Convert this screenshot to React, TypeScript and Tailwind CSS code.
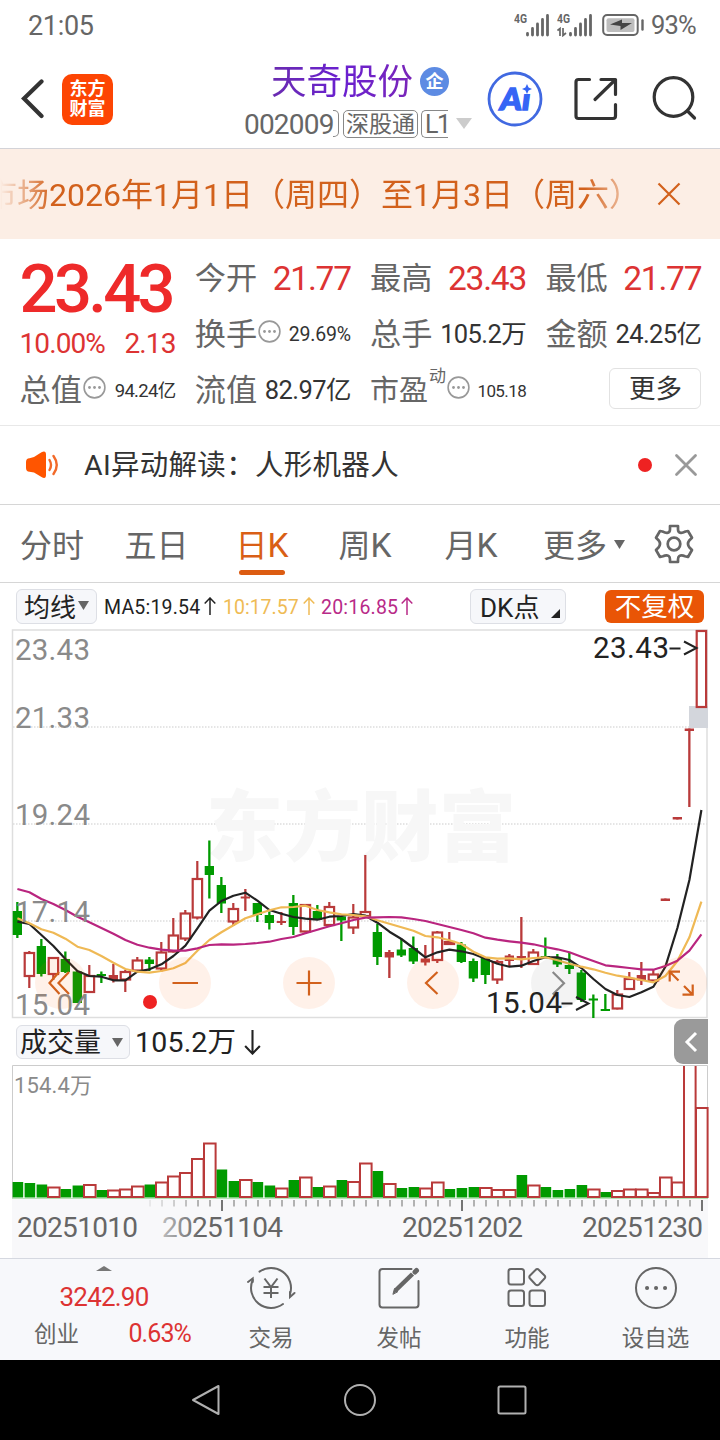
import React from 'react';
import clsx from 'clsx';

const INK = '#222222';
const RED = '#b93a3a';
const GREEN = '#009a00';
const ORANGE = '#d2611c';

const STEP = 12;
const FIRST_X = 17;
const xAt = (i: number) => FIRST_X + i * STEP;

// kind: h = hollow red, r = solid red, g = green; then wick top, body top, body bottom, wick bottom
type Candle = [string, number, number, number, number];

const candles: Candle[] = [
  ['g', 902, 911, 935, 938], ['h', 951, 952, 977, 988], ['g', 939, 946, 974, 976.5], ['h', 957, 957, 975, 980],
  ['g', 951.5, 959, 972, 973], ['g', 971, 971.5, 1003, 1003], ['h', 965, 975, 993, 993], ['g', 971.5, 974, 976, 983],
  ['r', 964, 975, 980, 982.5], ['h', 970, 971, 980.5, 992], ['h', 957, 959.5, 971.5, 971.5], ['g', 957, 959.5, 964, 971],
  ['h', 942, 951.5, 969.5, 971.5], ['h', 918, 934.5, 952.5, 952.5], ['h', 910, 912.5, 939.5, 941], ['h', 861, 878, 918.5, 919.5],
  ['g', 840.5, 866, 875, 898.5], ['g', 877, 885, 903.5, 913], ['h', 903, 908, 922.5, 926], ['r', 889, 896.5, 898.5, 911],
  ['g', 903, 903, 915, 922], ['g', 911.5, 915, 923, 929.5], ['r', 912, 921, 923, 925], ['g', 895, 903, 927, 935],
  ['h', 904, 904, 932.5, 932.5], ['g', 905, 911, 920, 920], ['h', 902, 906, 926, 926], ['g', 916, 916.5, 920.5, 941],
  ['h', 904, 916.5, 928.5, 934], ['h', 855, 911, 917, 917], ['g', 924, 932, 957, 965], ['r', 950, 952, 957.5, 978],
  ['g', 939, 949.5, 955.5, 957], ['g', 936.5, 948, 961.5, 964], ['r', 945, 958.5, 962.5, 965.5], ['h', 931, 931.5, 961, 963],
  ['h', 932, 941, 945, 945], ['g', 942, 944.5, 962, 963], ['g', 958.5, 961, 978.5, 982], ['g', 957, 957, 975, 984],
  ['h', 960, 961, 980.5, 984], ['r', 954, 955.5, 961, 966], ['r', 917, 956, 959, 968], ['h', 949, 951.5, 965, 965],
  ['g', 937.5, 956, 958, 958], ['g', 954, 958, 964.5, 967], ['g', 953, 965, 969, 974], ['g', 970, 972.5, 1000, 1002],
  ['g', 994.5, 998.5, 1000.5, 1018], ['g', 994, 1009, 1011, 1011], ['h', 990, 993.5, 1009.5, 1009.5], ['h', 972, 978, 990, 990],
  ['r', 962, 975, 980.5, 985], ['h', 970, 973.5, 981.5, 981.5], ['r', 898.5, 898.5, 901, 901], ['r', 817, 817, 819.5, 819.5],
  ['r', 728.5, 728.5, 731, 807], ['h', 630, 630, 708, 708],
];

const ma5 = [
  921.7, 924, 935, 946, 959, 971, 976, 976.7, 980.3, 980.3, 971.7, 969.3, 964.3, 956, 945.7, 928.3, 910.7, 901, 895.7, 892.7,
  900.7, 910, 913.7, 917, 918.7, 919.7, 916.7, 916, 914, 915.7, 922.7, 931.7, 939, 948, 957.3, 952.3, 949.7, 951.3, 954, 958.7,
  963.7, 966.7, 965.7, 961, 957.3, 957.3, 960, 968, 979, 989, 995, 997, 992.3, 986.7, 966.7, 928, 880, 810,
];

const ma10 = [
  918.3, 923.3, 929.3, 932.7, 938.7, 946.7, 950, 956, 962.7, 969, 971.7, 972.7, 971, 968.3, 963, 950.7, 940, 932.3, 925.3, 918.3,
  914.3, 910.3, 907.3, 907, 905.7, 910, 912.3, 914.3, 915, 916.3, 920.3, 923.7, 927.3, 930.7, 936, 937.3, 940.3, 944, 951.7, 957.3,
  958.7, 958.3, 959.3, 958, 957.3, 960.3, 963.7, 966.7, 969.3, 972.7, 975.7, 977.7, 980, 982.3, 976, 961, 937.3, 901.7,
];

const ma20 = [
  889, 892.3, 899, 904, 910, 916.7, 922.3, 928, 933.7, 940, 944.7, 947.7, 949.7, 950.7, 950.7, 948.3, 945, 944.3, 944.7, 944,
  943, 941.7, 939, 937, 933.3, 929.7, 926.3, 923.3, 920, 917.7, 917.3, 917, 917.3, 919, 921, 924, 927, 930, 933.3, 937.7,
  939.7, 941.3, 942.7, 944.3, 947, 949.3, 952.3, 956.7, 961, 965.3, 966.7, 968, 969.3, 969.7, 966, 960.7, 950.7, 934.3,
];

const volumeTops = [
  1182, 1183, 1184.5, 1186.5, 1189, 1185.5, 1184, 1190, 1189.5, 1188.5, 1185.5, 1184.5, 1181.5, 1175.5, 1172, 1158, 1142.5,
  1169.5, 1181, 1179, 1182, 1185.5, 1187.5, 1180, 1176.5, 1187, 1185.5, 1180, 1181, 1162.5, 1171, 1183, 1188, 1187, 1187.5,
  1181.5, 1189, 1188, 1187, 1187, 1189, 1189, 1175, 1184.5, 1187, 1190, 1189, 1185, 1188.5, 1192, 1190, 1188.5, 1188.5, 1192,
  1176.5, 1181.5, 1060, 1107,
];
const volumeKinds = 'gggrggrgrrrgrrrrrggrggrgrgrgrrgrggrrgggrrrgrggggrgrrrrrrrr';

const linePoints = (ys: number[]) => ys.map((y, i) => `${xAt(i) + 0.4},${y}`).join(' ');

function CandleMark({ data, x }: { data: Candle; x: number }) {
  const [kind, high, top, bottom, low] = data;
  const color = kind === 'g' ? GREEN : RED;
  if (kind === 'h') {
    return (
      <g stroke={color} strokeWidth="2.2" fill="none">
        <path d={`M${x + 0.3} ${high}V${top + 1}M${x + 0.3} ${bottom - 1}V${low}`} />
        <rect x={x - 4.3} y={top + 1} width="9.4" height={Math.max(bottom - top - 2, 1)} />
      </g>
    );
  }
  return (
    <g fill={color}>
      <rect x={x - 0.8} y={high} width="2.3" height={low - high} />
      <rect x={x - 4.3} y={top} width="9.3" height={bottom - top} />
    </g>
  );
}

function MoreDots({ className }: { className?: string }) {
  return (
    <svg className={clsx('size-[23px] shrink-0', className)} viewBox="0 0 23 23">
      <circle cx="11.5" cy="11.5" r="10.4" fill="none" stroke="#999" strokeWidth="1.6" />
      <g fill="#999">
        <circle cx="6.5" cy="11.5" r="1.4" />
        <circle cx="11.5" cy="11.5" r="1.4" />
        <circle cx="16.5" cy="11.5" r="1.4" />
      </g>
    </svg>
  );
}

function Signal({ data }: { data?: boolean }) {
  return (
    <svg className="h-6 w-9" viewBox="0 0 36 24">
      <text x="0" y="10" fontSize="13" fontWeight="700" fill="#666" textLength="13" lengthAdjust="spacingAndGlyphs">4G</text>
      <path d="M13.5 20.500v1.5M18.5 15.5v6.5M23.5 11v11M28.5 6.5v15.5M33.5 2.5v19.5" stroke="#666" strokeWidth="2.8" strokeLinecap="round" />
      {data && <path d="M0.5 17.5L3 15.5V23M6 15v7.5l3-2.5" fill="none" stroke="#666" strokeWidth="1.7" />}
    </svg>
  );
}

function StatusBar() {
  return (
    <div className="flex h-[50px] items-center pl-7 pr-6 pt-0.5 text-[#666]">
      <span className="text-[27px] leading-none tracking-[-0.3px]">21:05</span>
      <div className="ml-auto flex items-center">
        <div className="mb-0.5"><Signal /></div>
        <div className="mb-0.5 ml-[7px]"><Signal data /></div>
        <svg className="mb-0.5 ml-[9px] h-6 w-[43px]" viewBox="0 0 43 24">
          <rect x="1.2" y="2" width="34.5" height="20" rx="4" fill="none" stroke="#666" strokeWidth="2" />
          <rect x="4.5" y="5.2" width="28" height="13.8" rx="2" fill="#bdbdbd" />
          <path d="M8 11.5L20 6.5V10H30L18.5 17V13Z" fill="#444" />
          <path d="M40.5 7.5v9" stroke="#666" strokeWidth="2.4" strokeLinecap="round" />
        </svg>
        <span className="ml-1.5 text-[25.5px] leading-none tracking-[-0.8px]">93%</span>
      </div>
    </div>
  );
}

function Header() {
  return (
    <header className="flex h-[99px] items-center border-b border-[#d3d3d8]">
      <svg className="ml-5 h-[42px] w-6" viewBox="0 0 24 42">
        <path d="M21.5 3.5L4 20.5L21.5 38" fill="none" stroke="#333" strokeWidth="4.2" strokeLinecap="round" />
      </svg>
      <div className="ml-[18px] flex size-[51px] flex-col items-center justify-center rounded-[10px] bg-[#fd4503] text-[18px] font-bold leading-[20px] text-white">
        <span>东方</span>
        <span>财富</span>
      </div>
      <div className="ml-[131px] w-[230px]">
        <div className="ml-[27px] flex h-[42px] items-center">
          <span className="whitespace-nowrap bg-gradient-to-r from-[#6a2bb0] via-[#6a1fd0] to-[#7a25b8] bg-clip-text text-[35.5px] leading-[44px] text-transparent">天奇股份</span>
          <span className="ml-[7px] flex size-[29px] shrink-0 items-center justify-center rounded-full bg-[#5d8be3] text-[18px] font-bold leading-none text-white">企</span>
        </div>
        <div className="mt-[7px] flex h-[28px] items-center text-[#666]">
          <span className="w-[89px] whitespace-nowrap pt-0.5 text-[28px] leading-none tracking-[-0.8px]">002009</span>
          <span className="h-[27px] w-[6px] rounded-r-[5px] border border-l-0 border-[#888]" />
          <span className="ml-1 flex h-[28px] w-[75px] items-center justify-center rounded-[5px] border border-[#888] pt-px text-[23px] leading-none">深股通</span>
          <span className="ml-[3px] flex h-[28px] w-[27px] items-center rounded-l-[5px] border border-r-0 border-[#888] pl-[3px] pt-px text-[25px] leading-none tracking-[-1.5px]">L1</span>
          <svg className="ml-2 h-[11px] w-4" viewBox="0 0 16 11"><path d="M0 0H16L8 11Z" fill="#ccc" /></svg>
        </div>
      </div>
      <svg className="ml-[13px] size-14" viewBox="0 0 56 56">
        <text x="13" y="38.5" fontFamily="Lato, sans-serif" fontWeight="900" fontStyle="italic" fontSize="31" fill="#3565f5" stroke="#3565f5" strokeWidth="1.3" textLength="30.5" lengthAdjust="spacingAndGlyphs">Ai</text>
        <rect x="34" y="11" width="13" height="12" fill="#fff" />
        <path d="M40 13L41.6 16.4L45 18L41.6 19.6L40 23L38.4 19.6L35 18L38.4 16.4Z" fill="#3565f5" />
        <circle cx="28" cy="28" r="26" fill="none" stroke="#4169e1" strokeWidth="2.8" />
      </svg>
      <svg className="ml-[31px] size-11" viewBox="0 0 44 44" fill="none" stroke="#333" strokeWidth="3.2" strokeLinecap="round" strokeLinejoin="round">
        <path d="M15.5 2.5H4.5Q2 2.5 2 5V39Q2 41.5 4.5 41.5H39Q41.5 41.5 41.5 39V27.5" />
        <path d="M27 2.5H41.5V17.5M21 22.5L41 3" />
      </svg>
      <svg className="ml-[34px] size-[46px]" viewBox="0 0 46 46" fill="none" stroke="#333" strokeWidth="3.2" strokeLinecap="round">
        <circle cx="21.5" cy="21" r="19.3" />
        <path d="M35.5 35L42.5 42" />
      </svg>
    </header>
  );
}

function Notice() {
  return (
    <div className="flex h-[90px] items-center bg-[#fceee5] text-[#d2611c]">
      <div className="w-[624px] overflow-hidden pt-0.5 [mask-image:linear-gradient(to_right,transparent,#000_52px,#000_585px,transparent_645px)]">
        <div className="-ml-[15px] whitespace-nowrap text-[32px] leading-[44px]">市场2026年1月1日（周四）至1月3日（周六）</div>
      </div>
      <svg className="ml-[33px] size-6" viewBox="0 0 24 24"><path d="M1.5 1.5L22.5 22.5M22.5 1.5L1.5 22.5" stroke={ORANGE} strokeWidth="2.2" /></svg>
    </div>
  );
}

interface QuoteProps {
  label: string;
  value: string;
  size: string;
  dots?: boolean;
}

function Quote({ label, value, size, dots }: QuoteProps) {
  return (
    <div className="flex h-14 items-center whitespace-nowrap">
      <span className="text-[31.2px] leading-none text-[#666]">{label}</span>
      {dots && <MoreDots className="mb-2 ml-px" />}
      <span className={clsx('ml-auto leading-none', size)}>{value}</span>
    </div>
  );
}

const valueRed = 'text-[33.5px] tracking-[-1.2px] text-[#d33]';
const valueMid = 'text-[25.5px] tracking-[-0.6px] text-[#333]';

function Quotes() {
  return (
    <section className="h-[187px] border-b border-[#e8e8e8] pl-[19.5px] pt-3">
      <div className="grid grid-cols-[156px_156px_156px_156px] gap-x-[19.3px]">
        <div className="row-span-2 h-28 whitespace-nowrap text-[#ee2a2a]">
          <div className="mt-[5px] text-[67px] font-medium leading-[66px] tracking-[-3.7px]">23.43</div>
          <div className="mt-[8px] flex justify-between text-[28px] leading-[28px] tracking-[-0.9px] text-[#d33]">
            <span>10.00%</span>
            <span>2.13</span>
          </div>
        </div>
        <Quote label="今开" value="21.77" size={valueRed} />
        <Quote label="最高" value="23.43" size={valueRed} />
        <Quote label="最低" value="21.77" size={valueRed} />
        <Quote label="换手" value="29.69%" size="text-[19.5px] tracking-[-0.2px] text-[#333]" dots />
        <Quote label="总手" value="105.2万" size={valueMid} />
        <Quote label="金额" value="24.25亿" size={valueMid} />
        <Quote label="总值" value="94.24亿" size="text-[18.5px] tracking-[-0.7px] text-[#333]" dots />
        <Quote label="流值" value="82.97亿" size={valueMid} />
        <div className="flex h-14 items-center whitespace-nowrap text-[#666]">
          <span className="text-[29px] leading-none">市盈</span>
          <span className="mb-[29px] ml-px text-[17px] leading-none">动</span>
          <MoreDots className="mb-2 ml-px" />
          <span className="ml-auto text-[17px] leading-none tracking-[-0.6px] text-[#333]">105.18</span>
        </div>
        <div className="ml-auto mt-[5px] flex h-[41px] w-[92px] items-center justify-center rounded-md border border-[#e2e2e2] pt-0.5 text-[26.5px] leading-none text-[#333]">更多</div>
      </div>
    </section>
  );
}

function AiNews() {
  return (
    <div className="flex h-[79px] items-center border-b border-[#d6d6d6]">
      <svg className="ml-[26px] h-7 w-8" viewBox="0 0 32 28">
        <path d="M0 11Q0 7.5 3.5 7.3L8 6L15.5 1.3Q20 -0.8 20 3.5V24Q20 28.5 15.5 26L8 21.5L3.5 20.7Q0 20.5 0 17Z" fill="#ff5500" />
        <path d="M23.5 9Q26.5 14 23.5 19M27.5 5Q34 14 27.5 23" fill="none" stroke="#f26a2a" strokeWidth="2.4" strokeLinecap="round" />
      </svg>
      <span className="ml-[26px] whitespace-nowrap pt-[3px] text-[28.5px] leading-none tracking-[0.3px] text-[#333]">AI异动解读：人形机器人</span>
      <span className="ml-auto size-3.5 rounded-full bg-[#ee2222]" />
      <svg className="ml-[22px] mr-[22px] size-6" viewBox="0 0 24 24"><path d="M2.5 2.5L21.5 21.5M21.5 2.5L2.5 21.5" stroke="#999" strokeWidth="2.8" strokeLinecap="round" /></svg>
    </div>
  );
}

function Tabs() {
  return (
    <nav className="flex h-[78px] items-center whitespace-nowrap border-b border-[#d6d6d6] pl-5 pt-[5px] text-[32px] leading-none text-[#666]">
      <span className="w-[104.5px]">分时</span>
      <span className="w-[111px]">五日</span>
      <span className="relative w-[103px] text-[#d95f16]">
        日<span className="text-[33.5px]">K</span>
        <span className="absolute left-[3px] top-[41px] h-[5px] w-[46px] rounded-full bg-[#dc5c12]" />
      </span>
      <span className="w-[106px]">周<span className="text-[33.5px]">K</span></span>
      <span className="w-[98.5px]">月<span className="text-[33.5px]">K</span></span>
      <span>更多</span>
      <svg className="mb-1 ml-[7px] h-[9px] w-[11px]" viewBox="0 0 11 9"><path d="M0 0H11L5.5 9Z" fill="#666" /></svg>
      <svg className="mb-[5px] ml-[29px] size-10" viewBox="0 0 40 40" fill="none" stroke="#666" strokeWidth="2.7" strokeLinejoin="round">
        <path d="M16 2H24V5.5Q24 8.5 26.8 8.8Q28.5 9 31.5 7.5L34 7L38 13.8L35.5 16.2Q32.5 20 35.5 23.5L38 26L34 33L31 32.2Q27.5 30.5 25.3 32Q24 33 24 35.5V38H16V35.5Q16 33 14.7 32Q12.5 30.5 9 32.2L6 33L2 26L4.5 23.5Q7.5 20 4.5 16.2L2 13.8L6 7L8.5 7.5Q11.5 9 13.2 8.8Q16 8.5 16 5.5Z" />
        <circle cx="20" cy="20" r="6.3" />
      </svg>
    </nav>
  );
}

function Arrow({ down, className }: { down?: boolean; className: string }) {
  return (
    <svg className={className} viewBox="0 0 12 18" fill="none" stroke="currentColor" strokeWidth="1.5">
      <path d={down ? 'M6 0V17M0.7 11.5L6 17L11.3 11.5' : 'M6 18V1M0.7 6.5L6 1L11.3 6.5'} />
    </svg>
  );
}

function MaBar() {
  return (
    <div className="flex h-[46px] items-center whitespace-nowrap px-4 text-[19.5px] leading-none">
      <span className="flex h-[35px] w-[81px] items-center rounded-[6px] border border-[#dddfe5] bg-[#f6f7fa] pl-[7px] pt-[3px] text-[26px] text-[#222]">
        均线
        <svg className="mb-1 ml-[2px] h-[9px] w-[11px]" viewBox="0 0 11 9"><path d="M0 0H11L5.5 9Z" fill="#666" /></svg>
      </span>
      <span className="ml-[7px] w-[98px] pt-[3px] tracking-[0.2px] text-[#222]">MA5:19.54</span>
      <Arrow className="ml-[2px] h-[18px] w-3 text-[#222]" />
      <span className="ml-[7px] w-[79px] pt-[3px] text-[#efbb55]">10:17.57</span>
      <Arrow className="ml-[1px] h-[18px] w-3 text-[#efbb55]" />
      <span className="ml-[6px] w-[80px] pt-[3px] tracking-[0.2px] text-[#b82a88]">20:16.85</span>
      <Arrow className="h-[18px] w-3 text-[#b82a88]" />
      <span className="ml-auto mr-[39px] flex h-[35px] w-[96px] items-end rounded-[6px] border border-[#dddfe5] bg-[#f6f7fa] pb-[2px] pl-[9px] text-[26px] leading-[26px] text-[#222]">
        DK点
        <svg className="mb-[3px] ml-auto mr-[5px] size-[9px]" viewBox="0 0 9 9"><path d="M9 0V9H0Z" fill="#222" /></svg>
      </span>
      <span className="flex h-[33px] w-[99px] items-center justify-center rounded-[6px] bg-[#e95506] pt-[3px] text-[26.5px] text-white">不复权</span>
    </div>
  );
}

const priceLabels: [string, number][] = [['23.43', 660], ['21.33', 728], ['19.24', 825], ['17.14', 922], ['15.04', 1014.5]];

function PriceChart() {
  return (
    <svg className="block h-[390px] w-[720px] overflow-visible" viewBox="0 629 720 390">
      <rect x="12.5" y="630" width="694.5" height="387.5" fill="none" stroke="#dedede" strokeWidth="1.5" />
      <path d="M13 727H707M13 824H707M13 921H707" stroke="#ddd" strokeWidth="1.5" strokeDasharray="1.5 1.5" />
      <text x="206" y="855" fontSize="77" fontWeight="900" fill="#f7f7f7" textLength="310">东方财富</text>
      <rect x="689" y="706" width="19" height="22" fill="#d3d6dc" />
      {candles.map((c, i) => <CandleMark key={i} data={c} x={xAt(i)} />)}
      <g fill="none" strokeWidth="2.2" strokeLinejoin="round">
        <polyline points={linePoints(ma5)} stroke={INK} />
        <polyline points={linePoints(ma10)} stroke="#efb955" />
        <polyline points={linePoints(ma20)} stroke="#b9257f" />
      </g>
      <g fill="#8a8a8a" fontSize="29.5">
        {priceLabels.map(([text, y]) => <text key={text} x="15" y={y} textLength="75">{text}</text>)}
      </g>
      <g fill="#ff5a00" fillOpacity="0.085">
        {[61, 185, 309, 433, 681].map((cx) => <circle key={cx} cx={cx} cy="983" r="26" />)}
        <circle cx="557" cy="983" r="26" fill="#555" fillOpacity="0.07" />
      </g>
      <g fill="none" stroke={ORANGE} strokeWidth="2.2">
        <path d="M59 972L49.5 983L59.5 994M69 972L58.5 983L69 994" />
        <path d="M172.5 983H198M296.5 983H321.5M309 970.5V995.5" />
        <path d="M437.5 972L426 983L437.5 994" />
        <path d="M680 971.7H669.7V981.5M669.7 971.7L678.5 980.5M692.7 984.5V994.7H682.5M684 986L692.7 994.7" />
        <path d="M552.7 972L564 983.3L552.7 994.5" stroke="#888" />
      </g>
      <circle cx="150" cy="1002" r="7" fill="#ee2222" />
      <g fill={INK} fontSize="29.5">
        <text x="593" y="657.5" textLength="76">23.43</text>
        <text x="486" y="1013" textLength="76">15.04</text>
        <path d="M669.5 648.5H680.5M684 641.5L696.5 648L684 654.5M561.5 1003.5H572.5M576 997L588.5 1003.5L576 1010" fill="none" stroke={INK} strokeWidth="2" />
      </g>
    </svg>
  );
}

function VolumeBar() {
  return (
    <div className="flex h-[46px] items-center whitespace-nowrap pl-4 pr-3 text-[#222]">
      <span className="flex h-[34px] w-[114px] items-center rounded-[6px] border border-[#dddfe5] bg-[#f6f7fa] pl-[3px] pt-[3px] text-[27px] leading-none">
        成交量
        <svg className="mb-[3px] ml-[11px] h-[9px] w-[11px]" viewBox="0 0 11 9"><path d="M0 0H11L5.5 9Z" fill="#666" /></svg>
      </span>
      <span className="ml-[5px] pt-[3px] text-[28.5px] leading-none tracking-[0.2px]">105.2万</span>
      <Arrow down className="ml-[8px] h-[25px] w-[17px]" />
      <span className="mb-px ml-auto flex h-[45px] w-[34px] items-center justify-center rounded-l-[9px] bg-[#9a9a9a]">
        <svg className="h-[22px] w-3.5" viewBox="0 0 14 22"><path d="M12 2L3 11L12 20" fill="none" stroke="#fff" strokeWidth="3" /></svg>
      </span>
    </div>
  );
}

function VolumeChart() {
  return (
    <svg className="block h-[193px] w-[720px]" viewBox="0 1065 720 193">
      <defs>
        <linearGradient id="tickFade" gradientUnits="userSpaceOnUse" x1="135" y1="0" x2="200" y2="0">
          <stop offset="0" stopColor="#f8f8fa" />
          <stop offset="1" stopColor="#f8f8fa" stopOpacity="0" />
        </linearGradient>
      </defs>
      <rect x="12" y="1198" width="696" height="60" fill="#f8f8fa" />
      <path d="M12.5 1198V1065.5H707.5V1198" fill="none" stroke="#ccc" />
      <path d="M12 1198.5H708" stroke="#b5e2b5" />
      {volumeTops.map((top, i) => {
        const x = xAt(i) + 0.6;
        return volumeKinds[i] === 'g'
          ? <rect key={i} x={x - 5} y={top} width="10.6" height={1197.5 - top} fill={GREEN} />
          : <rect key={i} x={x - 5.6} y={top + 1} width="11.6" height={1196 - top} fill="#fff" stroke={RED} strokeWidth="2" />;
      })}
      <path d="M13 1065.5H707" stroke="#ccc" />
      <text x="14" y="1093" fontSize="22" fill="#8a8a8a" textLength="78">154.4万</text>
      {Array.from({ length: 47 }, (_, i) => {
        const major = i % 20 === 6;
        return <path key={i} d={`M${150 + i * STEP} 1200V${major ? 1211 : 1206.5}`} stroke={major ? '#666' : '#aaa'} strokeWidth="1.8" />;
      })}
      <g fill="#666" fontSize="28">
        <text x="17" y="1237" textLength="121">20251010</text>
        <text x="162" y="1237" textLength="121">20251104</text>
        <text x="402" y="1237" textLength="121">20251202</text>
        <text x="582" y="1237" textLength="121">20251230</text>
      </g>
      <rect x="142" y="1199.5" width="60" height="45" fill="url(#tickFade)" />
    </svg>
  );
}

function ToolItem({ label, className, children }: { label: string; className: string; children: React.ReactNode }) {
  return (
    <div className={clsx('flex flex-col items-center', className)}>
      <svg className="mt-[4px] h-[50px] w-[50px]" viewBox="0 0 50 50" fill="none" stroke="#666" strokeWidth="2" strokeLinecap="round">{children}</svg>
      <span className="mt-[13px] whitespace-nowrap text-[22.5px] leading-[24px] text-[#666]">{label}</span>
    </div>
  );
}

function Footer() {
  return (
    <footer className="flex h-[102px] border-t border-[#d5d8e0] bg-[#f7f8fb]">
      <div className="w-[207px] text-[#d33]">
        <svg className="mx-auto mt-[7px] h-[5px] w-4" viewBox="0 0 16 5"><path d="M0 5L8 0L16 5Z" fill="#777" /></svg>
        <div className="mt-[12px] pl-px text-center text-[26px] leading-[28px] tracking-[-0.8px]">3242.90</div>
        <div className="mt-[9px] flex items-center justify-between pl-[34px] pr-4 leading-[28px]">
          <span className="text-[22.5px] text-[#666]">创业</span>
          <span className="text-[25px] tracking-[-0.9px]">0.63%</span>
        </div>
      </div>
      <ToolItem label="交易" className="w-[128px]">
        <path d="M13.5 8.6A20 20 0 0 1 44 31.2M37 41A20 20 0 0 1 6.7 17" />
        <path d="M2 19L6.7 15.5V19M44 29V34L48.5 30" />
        <path d="M18.5 15.5L25 24L31.5 15.5M25 24V35M17.5 24H32.5M17.5 30H32.5" strokeLinecap="butt" />
      </ToolItem>
      <ToolItem label="发帖" className="w-[128px]">
        <path d="M37.5 6H8.5Q5.5 6 5.5 9V41.5Q5.5 44.5 8.5 44.5H41.5Q44.5 44.5 44.5 41.5V18" />
        <path d="M22 27L38.5 11" strokeWidth="4.5" strokeLinecap="butt" />
        <path d="M19 31L20.5 25.5L23.5 28.5Z" fill="#666" strokeWidth="1" />
        <path d="M41 9L42.5 7.5" strokeWidth="5" />
      </ToolItem>
      <ToolItem label="功能" className="w-[128px]">
        <rect x="6.5" y="6" width="15.5" height="15.5" rx="2.5" />
        <rect x="6.5" y="27.5" width="15.5" height="15.5" rx="2.5" />
        <rect x="27.5" y="27.5" width="15.5" height="15.5" rx="2.5" />
        <path d="M33.5 7L28 12.5Q26.5 14 28 15.5L33.5 21.5Q35.2 23 37 21.5L42.5 15.5Q44 14 42.5 12.5L37 7Q35.2 5 33.5 7Z" />
      </ToolItem>
      <ToolItem label="设自选" className="w-[129px]">
        <circle cx="25" cy="25" r="20" />
        <path d="M16 25H16.1M25 25H25.1M34 25H34.1" strokeWidth="4" />
      </ToolItem>
    </footer>
  );
}

function SystemNav() {
  return (
    <div className="flex h-20 items-center bg-black pl-[189px]">
      <svg className="size-8" viewBox="0 0 32 32"><path d="M29.5 2V30L4 16Z" fill="none" stroke="#b0b0b0" strokeWidth="2" strokeLinejoin="round" /></svg>
      <svg className="ml-[123px] size-8" viewBox="0 0 32 32"><circle cx="16" cy="16" r="15" fill="none" stroke="#b0b0b0" strokeWidth="2" /></svg>
      <svg className="ml-[120px] size-8" viewBox="0 0 32 32"><rect x="2.5" y="2.5" width="27" height="27" rx="1.5" fill="none" stroke="#b0b0b0" strokeWidth="2" /></svg>
    </div>
  );
}

export default function App() {
  return (
    <div className="h-[1440px] w-[720px] overflow-hidden bg-white font-['Roboto','Noto_Sans_CJK_SC',sans-serif]">
      <StatusBar />
      <Header />
      <Notice />
      <Quotes />
      <AiNews />
      <Tabs />
      <MaBar />
      <PriceChart />
      <VolumeBar />
      <VolumeChart />
      <Footer />
      <SystemNav />
    </div>
  );
}
